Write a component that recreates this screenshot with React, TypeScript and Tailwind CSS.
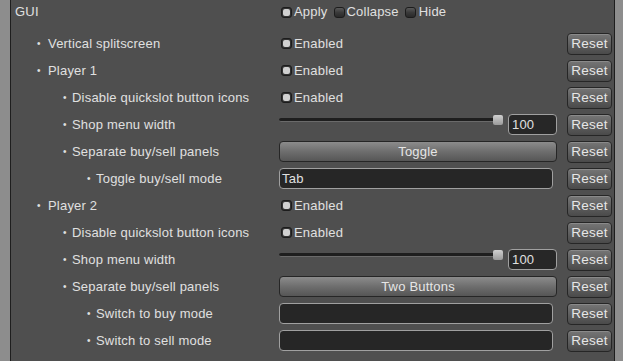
import React from 'react';

type Ctrl =
  | { kind: 'check'; label: string; on: boolean }
  | { kind: 'slider'; value: number }
  | { kind: 'button'; label: string }
  | { kind: 'input'; value: string };

interface Row { label: string; level: number; ctrl: Ctrl; }

const ROWS: Row[] = [
  { label: 'Vertical splitscreen', level: 1, ctrl: { kind: 'check', label: 'Enabled', on: true } },
  { label: 'Player 1', level: 1, ctrl: { kind: 'check', label: 'Enabled', on: true } },
  { label: 'Disable quickslot button icons', level: 2, ctrl: { kind: 'check', label: 'Enabled', on: true } },
  { label: 'Shop menu width', level: 2, ctrl: { kind: 'slider', value: 100 } },
  { label: 'Separate buy/sell panels', level: 2, ctrl: { kind: 'button', label: 'Toggle' } },
  { label: 'Toggle buy/sell mode', level: 3, ctrl: { kind: 'input', value: 'Tab' } },
  { label: 'Player 2', level: 1, ctrl: { kind: 'check', label: 'Enabled', on: true } },
  { label: 'Disable quickslot button icons', level: 2, ctrl: { kind: 'check', label: 'Enabled', on: true } },
  { label: 'Shop menu width', level: 2, ctrl: { kind: 'slider', value: 100 } },
  { label: 'Separate buy/sell panels', level: 2, ctrl: { kind: 'button', label: 'Two Buttons' } },
  { label: 'Switch to buy mode', level: 3, ctrl: { kind: 'input', value: '' } },
  { label: 'Switch to sell mode', level: 3, ctrl: { kind: 'input', value: '' } },
];

const INDENT: Record<number, string> = { 1: 'pl-[26px]', 2: 'pl-[52px]', 3: 'pl-[76px]' };
const BULLET_W: Record<number, string> = { 1: 'w-[11px]', 2: 'w-[9px]', 3: 'w-[9px]' };

function Check({ on }: { on: boolean }) {
  return on ? (
    <span className="w-[11px] h-[11px] rounded-[3px] bg-[#333] border border-[#1c1c1c] flex items-center justify-center shrink-0">
      <span className="block w-[7px] h-[7px] rounded-[2px] bg-[#d0d0d0]" />
    </span>
  ) : (
    <span className="block w-[11px] h-[11px] rounded-[3px] border border-[#1c1c1c] bg-gradient-to-b from-[#5a5a5a] via-[#3a3a3a] to-[#2a2a2a] shrink-0" />
  );
}

function Reset() {
  return (
    <button className="w-[45px] h-[22px] rounded-[4px] border border-[#262626] bg-gradient-to-b from-[#767676] to-[#4a4a4a] text-[13.5px] text-[#e6e6e6] leading-none shadow-[inset_0_1px_0_#8a8a8a]">
      Reset
    </button>
  );
}

function Control({ ctrl }: { ctrl: Ctrl }) {
  if (ctrl.kind === 'check') {
    return (
      <div className="flex items-center gap-[2px] pl-[2px]">
        <Check on={ctrl.on} />
        <span>{ctrl.label}</span>
      </div>
    );
  }
  if (ctrl.kind === 'slider') {
    return (
      <div className="flex items-start h-full">
        <div className="relative w-[224px] h-[10px] mt-[4px]">
          <div className="absolute left-0 right-[2px] top-[3px] h-[4px] rounded-full bg-[#1e1e1e] border-b border-[#6a6a6a]" />
          <div className="absolute right-0 top-0 w-[10px] h-[10px] rounded-[2px] bg-gradient-to-b from-[#d0d0d0] to-[#9a9a9a]" />
        </div>
        <div className="ml-[5px] mt-[3px] w-[49px] h-[21px] rounded-[4px] bg-[#272727] border border-[#a0a0a0] pl-[3px] flex items-center">
          {ctrl.value}
        </div>
      </div>
    );
  }
  if (ctrl.kind === 'button') {
    return (
      <button className="w-[278px] h-[21px] rounded-[4px] border border-[#262626] bg-gradient-to-b from-[#8c8c8c] via-[#6e6e6e] to-[#565656] text-[#e6e6e6] leading-none">
        {ctrl.label}
      </button>
    );
  }
  return (
    <div className="w-[274px] h-[21px] rounded-[4px] bg-[#262626] border border-[#a0a0a0] pl-[2px] flex items-center">
      {ctrl.value}
    </div>
  );
}

export default function App() {
  return (
    <div
      className="w-[623px] h-[361px] flex overflow-hidden text-[13px] tracking-[0.2px] text-[#e0e0e0]"
      style={{ fontFamily: '"Liberation Sans", Arial, sans-serif' }}
    >
      <div className="w-[11px] bg-[#8d8d8d] border-r border-[#1e1e1e] shrink-0" />
      <div className="w-[603px] bg-[#4f4f4f] flex flex-col shrink-0">
        <div className="h-[24px] flex items-center">
          <span className="w-[268px] pl-[4px]">GUI</span>
          <div className="flex items-center pl-[2px]">
            <Check on />
            <span className="ml-[2px]">Apply</span>
            <span className="ml-[6px]"><Check on={false} /></span>
            <span className="ml-[2px]">Collapse</span>
            <span className="ml-[6px]"><Check on={false} /></span>
            <span className="ml-[3px]">Hide</span>
          </div>
        </div>
        <div className="mt-[6px] flex flex-col">
          {ROWS.map((r, i) => (
            <div key={i} className="h-[27px] flex items-center">
              <div className={`w-[268px] flex items-center ${INDENT[r.level]}`}>
                <span className={`${BULLET_W[r.level]} text-[10px] shrink-0`}>•</span>
                <span>{r.label}</span>
              </div>
              <div className="w-[278px] h-full flex items-center">
                <Control ctrl={r.ctrl} />
              </div>
              <div className="ml-[10px]">
                <Reset />
              </div>
            </div>
          ))}
        </div>
      </div>
      <div className="flex-1 bg-[#8d8d8d] border-l border-[#1e1e1e]" />
    </div>
  );
}
